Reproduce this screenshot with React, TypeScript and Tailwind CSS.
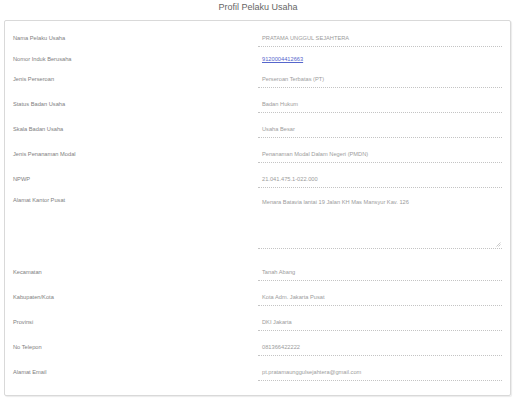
import React from 'react'

type Field = {
  label: string
  value: string
  kind?: 'input' | 'link' | 'textarea'
}

const fields: Field[] = [
  { label: 'Nama Pelaku Usaha', value: 'PRATAMA UNGGUL SEJAHTERA' },
  { label: 'Nomor Induk Berusaha', value: '9120004412663', kind: 'link' },
  { label: 'Jenis Perseroan', value: 'Perseroan Terbatas (PT)' },
  { label: 'Status Badan Usaha', value: 'Badan Hukum' },
  { label: 'Skala Badan Usaha', value: 'Usaha Besar' },
  { label: 'Jenis Penanaman Modal', value: 'Penanaman Modal Dalam Negeri (PMDN)' },
  { label: 'NPWP', value: '21.041.475.1-022.000' },
  { label: 'Alamat Kantor Pusat', value: 'Menara Batavia lantai 19 Jalan KH Mas Mansyur Kav. 126', kind: 'textarea' },
  { label: 'Kecamatan', value: 'Tanah Abang' },
  { label: 'Kabupaten/Kota', value: 'Kota Adm. Jakarta Pusat' },
  { label: 'Provinsi', value: 'DKI Jakarta' },
  { label: 'No Telepon', value: '081366422222' },
  { label: 'Alamat Email', value: 'pt.pratamaunggulsejahtera@gmail.com' },
]

// baris form: label kiri, nilai kanan
function Row({ field, last }: { field: Field; last: boolean }) {
  if (field.kind === 'link') {
    return (
      <div className="grid grid-cols-[245px_244px] items-center h-[10px] mb-[6px]">
        <span className="text-[#808080] leading-[8px]">{field.label}</span>
        <a href="#" className="pl-[4px] text-[#5566cc] underline leading-[8px]">
          {field.value}
        </a>
      </div>
    )
  }

  if (field.kind === 'textarea') {
    return (
      <div className="grid grid-cols-[245px_244px] items-start mb-[14px]">
        <span className="text-[#808080] leading-[8px] pt-[1px]">{field.label}</span>
        <div className="relative h-[54px] border-b border-dotted border-[#c4c4c4] pl-[4px] pt-[3px]">
          <span className="text-[#9c9c9c] leading-[8px] block">{field.value}</span>
          <svg className="absolute right-[1px] bottom-[1px]" width="5" height="5" viewBox="0 0 5 5">
            <line x1="0.5" y1="4.5" x2="4.5" y2="0.5" stroke="#a8a8a8" strokeWidth="0.6" />
            <line x1="2.5" y1="4.5" x2="4.5" y2="2.5" stroke="#a8a8a8" strokeWidth="0.6" />
          </svg>
        </div>
      </div>
    )
  }

  return (
    <div className={`grid grid-cols-[245px_244px] items-center h-[18px] ${last ? '' : 'mb-[7px]'}`}>
      <span className="text-[#808080] leading-[8px]">{field.label}</span>
      <div className="h-full flex items-center border-b border-dotted border-[#c4c4c4] pl-[4px]">
        <span className="text-[#9c9c9c] leading-[8px]">{field.value}</span>
      </div>
    </div>
  )
}

export default function App() {
  return (
    <div
      className="w-[516px] h-[404px] bg-white"
      style={{ fontFamily: '"Liberation Sans", Arial, sans-serif' }}
    >
      <h1 className="h-[20px] flex items-center justify-center text-[9px] text-[#666] font-normal pb-[4px]">
        Profil Pelaku Usaha
      </h1>
      <div className="ml-[4px] w-[507px] border border-[#d9d9d9] rounded-[2px] shadow-[1px_1px_1px_rgba(0,0,0,0.08)] pt-[8px] pb-[14px] pl-[8px] text-[5.7px]">
        {fields.map((f, i) => (
          <Row key={f.label} field={f} last={i === fields.length - 1} />
        ))}
      </div>
    </div>
  )
}
